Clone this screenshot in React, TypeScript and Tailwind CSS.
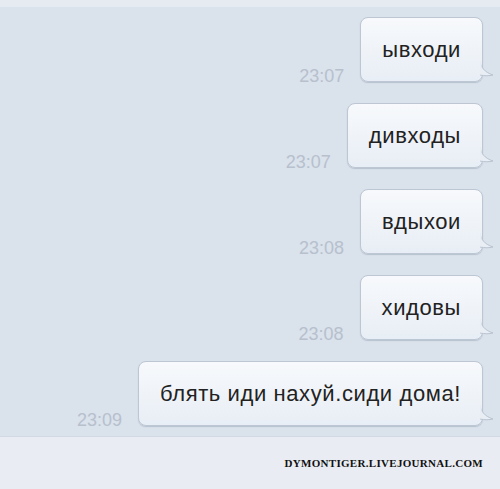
import React from "react";

interface Message {
  text: string;
  time: string;
}

const messages: Message[] = [
  { text: "ывходи", time: "23:07" },
  { text: "дивходы", time: "23:07" },
  { text: "вдыхои", time: "23:08" },
  { text: "хидовы", time: "23:08" },
  { text: "блять иди нахуй.сиди дома!", time: "23:09" },
];

const Tail = () => (
  <svg
    className="absolute right-[-13px] bottom-[3px]"
    width="16"
    height="18"
    viewBox="0 0 16 18"
  >
    <path
      d="M0 0 C1 6 4 11 13 14 C9 15 5 15 0 14 Z"
      fill="#e9eef5"
      stroke="#b9c3d0"
      strokeWidth="1"
    />
    <rect x="0" y="-1" width="1.5" height="14.5" fill="#e9eef5" />
  </svg>
);

const Bubble = ({ text, time }: Message) => (
  <div className="flex items-end gap-[16px]">
    <span className="text-[18px] leading-none text-[#b7c0cc] mb-[-3px]">{time}</span>
    <div className="relative">
      <div className="h-[65px] px-[21px] flex items-center rounded-[8px] border border-[#bdc7d3] bg-gradient-to-b from-[#f7f9fc] to-[#e8eef5] shadow-[0_1px_1px_rgba(120,135,155,0.35)] text-[22px] text-[#222] tracking-[0.6px]">
        {text}
      </div>
      <Tail />
    </div>
  </div>
);

export default function App() {
  return (
    <div
      className="w-[500px] h-[489px] bg-[#dae2ec] flex flex-col overflow-hidden"
      style={{ fontFamily: "'Liberation Sans', Arial, sans-serif" }}
    >
      <div className="h-[7px] bg-[#e6ebf2] shrink-0" />
      <div className="flex-1 flex flex-col items-end gap-[21px] pt-[10px] pr-[17px]">
        {messages.map((m, i) => (
          <Bubble key={i} text={m.text} time={m.time} />
        ))}
      </div>
      <div className="h-[53px] shrink-0 bg-[#e9edf3] border-t border-[#d2d9e2] flex items-center justify-end pr-[17px]">
        <span
          className="text-[11px] font-bold text-[#111] tracking-[0.3px]"
          style={{ fontFamily: "'Liberation Serif', serif" }}
        >
          DYMONTIGER.LIVEJOURNAL.COM
        </span>
      </div>
    </div>
  );
}
